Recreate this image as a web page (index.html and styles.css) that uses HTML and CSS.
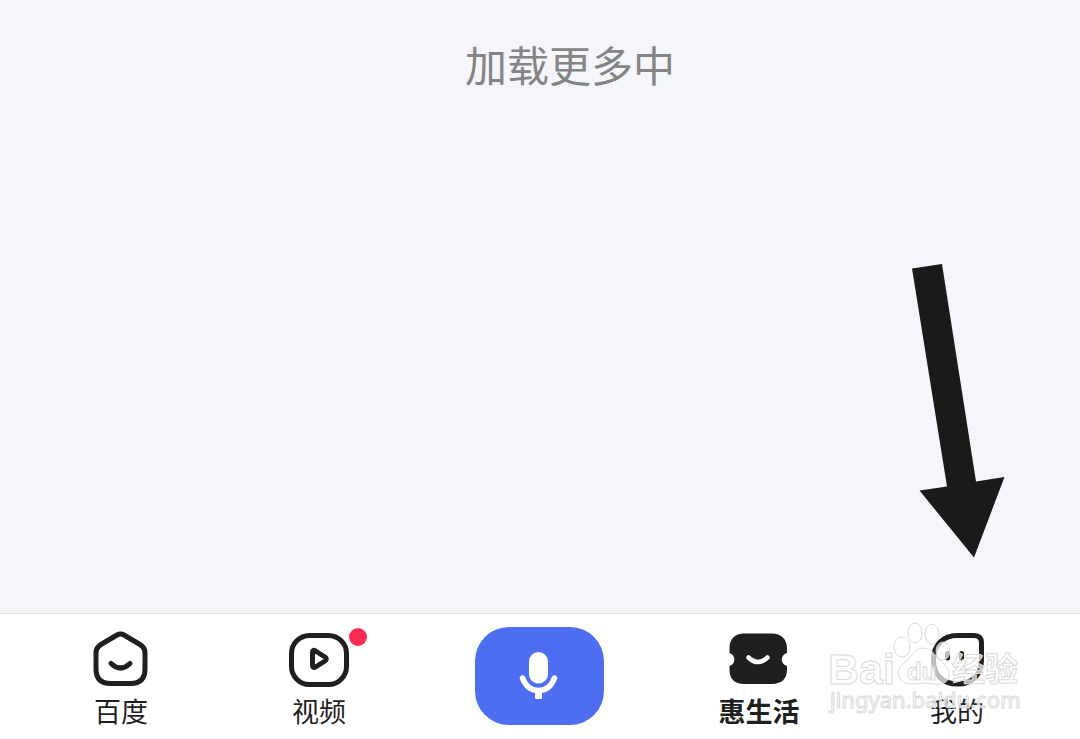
FILE: index.html
```html
<!DOCTYPE html>
<html lang="zh-CN">
<head>
    <meta charset="UTF-8">
    <meta name="viewport" content="width=device-width, initial-scale=1.0">
    <title>惠生活</title>
    <link rel="stylesheet" href="styles.css">
</head>
<body>
    <main class="content">
        <p class="loading">加载更多中</p>
    </main>

    <nav class="tabbar">
        <a class="tab" href="#home">
            <svg class="tab-icon line" viewBox="0 0 60 58" aria-hidden="true">
                <path d="M26 5 Q29.500 3 33 5 L49 14.500 Q54 17.500 54 23 V39 Q54 53.500 39.500 53.500 H19.500 Q5 53.500 5 39 V23 Q5 17.500 10 14.500 Z"/>
                <path d="M20 33.500 Q29.500 42.500 39 33.500"/>
            </svg>
            <span class="tab-label">百度</span>
        </a>
        <a class="tab" href="#video">
            <span class="icon-wrapper">
                <svg class="tab-icon line" viewBox="0 0 60 58" aria-hidden="true">
                    <rect x="2.500" y="5.500" width="55" height="49" rx="18"/>
                    <path d="M23.500 22.500 Q23.500 19 26.500 21 L36 27 Q38.500 29 36 31 L26.500 37 Q23.500 38.500 23.500 35 Z"/>
                </svg>
                <span class="dot"></span>
            </span>
            <span class="tab-label">视频</span>
        </a>
        <div class="tab-mic">
            <button class="mic" type="button" aria-label="语音">
                <svg class="mic-icon" viewBox="0 0 40 50" aria-hidden="true">
                    <rect x="10" y="1" width="19" height="31.500" rx="9.500" fill="#fff"/>
                    <path d="M3.500 27 C6.500 35 12 39.500 19.500 39.500 S32.500 35 35.500 27" fill="none" stroke="#fff" stroke-width="5.500" stroke-linecap="round"/>
                    <path d="M16 39 H23 V46.500 Q23 48 21.500 48 H17.500 Q16 48 16 46.500 Z" fill="#fff"/>
                </svg>
            </button>
        </div>
        <a class="tab active" href="#life">
            <svg class="tab-icon" viewBox="0 0 60 58" aria-hidden="true">
                <path d="M15 3.500 H43 C52 3.500 58 9 58 18 V23 C51 25 51 34 58 36 V40 C58 49 52 54 43 54 H15 C6 54 0.500 49 0.500 40 V36 C7 34 7 25 0.500 23 V18 C0.500 9 6 3.500 15 3.500 Z" fill="#1f1f1f"/>
                <path d="M19.500 27.500 Q29 36.500 38.500 27.500" fill="none" stroke="#fff" stroke-width="4.500" stroke-linecap="round"/>
            </svg>
            <span class="tab-label">惠生活</span>
        </a>
        <a class="tab" href="#mine">
            <svg class="tab-icon line" viewBox="0 0 60 58" aria-hidden="true">
                <path d="M30.500 5.500 H47 Q54.500 5.500 54.500 13 V30 C54.500 45 45 54 30.500 54 C16 54 6.500 45 6.500 30 C6.500 15 16 5.500 30.500 5.500 Z"/>
                <path d="M20.500 23.500 V28 M34.500 23.500 V28"/>
            </svg>
            <span class="tab-label">我的</span>
        </a>
    </nav>

    <!-- 箭头 -->
    <svg class="arrow" viewBox="0 0 94 295" aria-hidden="true">
        <polygon points="1,5.500 31,1 65,218.500 93.500,214 63,294.500 8.500,227.500 36,223.500"/>
    </svg>

    <!-- 水印 -->
    <svg class="watermark" viewBox="0 0 200 95" aria-hidden="true">
        <g class="mark">
            <ellipse cx="77" cy="27" rx="8" ry="10"/>
            <ellipse cx="90" cy="13" rx="7" ry="10"/>
            <ellipse cx="107" cy="14" rx="7" ry="10"/>
            <ellipse cx="118" cy="31" rx="7" ry="9"/>
            <path d="M98 28 C89 28 87 38 79 43 C68 51 74 65 87 64 C94 63 102 63 109 64 C124 67 129 53 119 44 C111 38 108 28 98 28 Z"/>
            <text class="mark-name" x="3" y="64">Bai</text>
            <text class="mark-du" x="82" y="60">du</text>
            <text class="mark-cn" x="127" y="61">经验</text>
            <text class="mark-url" x="5" y="88">jingyan.baidu.com</text>
        </g>
    </svg>
</body>
</html>
```
FILE: styles.css
```css
body {
    position: relative;
    display: flex;
    flex-direction: column;
    min-height: 100vh;
    margin: 0;
    background-color: #f4f6fb;
    color: #1f1f1f;
    font-family: "Noto Sans CJK SC", sans-serif;
}

.content {
    flex: 1;
    padding: 32px 0 0 60px;
}

.loading {
    margin: 0;
    color: #858585;
    font-size: 42px;
    line-height: 64px;
    text-align: center;
}

.tabbar {
    display: flex;
    align-items: flex-start;
    padding: 13px 24px 12px 22px;
    border-top: 1px solid #e0e2e8;
    background-color: #fff;
}

.tab {
    display: flex;
    flex: 9;
    flex-direction: column;
    align-items: center;
    gap: 7px;
    padding-top: 3px;
    color: #1f1f1f;
    text-decoration: none;
}

.tab-icon {
    display: block;
    width: 60px;
    height: 58px;
}

.line {
    fill: none;
    stroke: #1f1f1f;
    stroke-width: 5;
    stroke-linecap: round;
    stroke-linejoin: round;
}

.tab-label {
    font-size: 27px;
    line-height: 32px;
}

.active .tab-label {
    font-weight: bold;
}

.icon-wrapper {
    position: relative;
}

.dot {
    position: absolute;
    top: -2px;
    right: -18px;
    width: 18px;
    height: 18px;
    border-radius: 50%;
    background-color: #fd2b51;
}

.tab-mic {
    display: flex;
    flex: 11;
    justify-content: center;
}

.mic {
    display: flex;
    justify-content: center;
    align-items: center;
    width: 129px;
    height: 98px;
    padding: 0;
    border: none;
    border-radius: 34px;
    background-color: #4e6ef2;
    cursor: pointer;
}

.mic-icon {
    width: 40px;
    height: 50px;
}

.arrow {
    position: absolute;
    right: 75px;
    bottom: 181px;
    width: 94px;
    height: 295px;
    fill: #1a1a1a;
}

.watermark {
    position: absolute;
    right: 55px;
    bottom: 24px;
    width: 200px;
    height: 95px;
    pointer-events: none;
}

.mark {
    fill: rgba(255, 255, 255, 0.7);
    stroke: #dadada;
    stroke-width: 1;
    font-family: "Liberation Sans", "Noto Sans CJK SC", sans-serif;
}

.mark-name {
    font-size: 43px;
    font-weight: bold;
}

.mark-du {
    font-size: 24px;
    font-weight: bold;
}

.mark-cn {
    font-size: 33px;
    font-weight: bold;
}

.mark-url {
    font-family: "Noto Sans", sans-serif;
    font-size: 22px;
}
```
